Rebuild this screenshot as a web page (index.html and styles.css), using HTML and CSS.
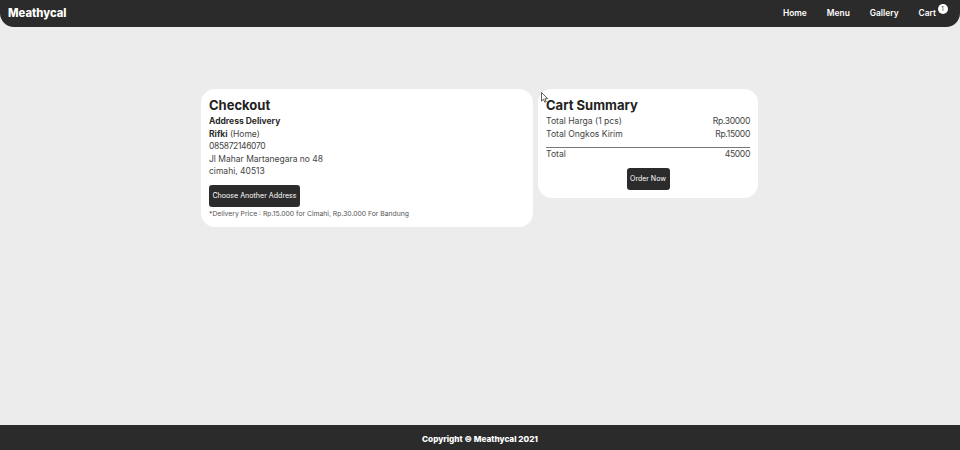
FILE: index.html
```html
<!DOCTYPE html>
<html lang="en">
<head>
    <meta charset="UTF-8">
    <meta name="viewport" content="width=device-width, initial-scale=1.0">
    <title>Meathycal</title>
    <link rel="stylesheet" href="styles.css">
</head>
<body>

<header class="navbar">
    <a class="brand" href="#">Meathycal</a>
    <nav class="nav-links">
        <a href="#">Home</a>
        <a href="#">Menu</a>
        <a href="#">Gallery</a>
        <a class="cart-link" href="#">Cart<span class="cart-badge">1</span></a>
    </nav>
</header>

<main class="content">
    <section class="card checkout">
        <h2>Checkout</h2>
        <p class="line"><b>Address Delivery</b></p>
        <p class="line"><b>Rifki</b> (Home)</p>
        <p class="line amount">085872146070</p>
        <p class="line">Jl Mahar Martanegara no 48</p>
        <p class="line">cimahi, 40513</p>
        <button class="btn btn-address" type="button">Choose Another Address</button>
        <p class="note">*Delivery Price : Rp.15.000 for Cimahi, Rp.30.000 For Bandung</p>
    </section>

    <section class="card summary">
        <h2>Cart Summary</h2>
        <div class="row"><span>Total Harga (1 pcs)</span><span class="amount">Rp.30000</span></div>
        <div class="row"><span>Total Ongkos Kirim</span><span class="amount">Rp.15000</span></div>
        <div class="row total"><span>Total</span><span class="amount">45000</span></div>
        <div class="actions">
            <button class="btn btn-order" type="button">Order Now</button>
        </div>
    </section>
</main>

<footer class="footer">Copyright © Meathycal 2021</footer>

<svg class="cursor" width="8" height="11" viewBox="0 0 8 11">
    <path d="M.5.5v8.6l2-1.9 1.3 3 1.4-.6-1.3-2.9h2.8z" fill="#fff" stroke="#333" stroke-width=".8"/>
</svg>

</body>
</html>
```

FILE: styles.css
```css
* {
    box-sizing: border-box;
}

body {
    font-family: 'Inter', 'Liberation Sans', sans-serif;
    background-color: #ececec;
    color: #2b2b2b;
    margin: 0;
    height: 450px;
    display: flex;
    flex-direction: column;
    overflow: hidden;
}

.navbar {
    background-color: #2b2b2b;
    height: 27px;
    border-radius: 0 0 14px 14px;
    display: flex;
    align-items: center;
    justify-content: space-between;
    padding: 0 24px 2px 8px;
    flex-shrink: 0;
}

.brand {
    color: #fff;
    font-size: 11.2px;
    font-weight: 800;
    text-decoration: none;
}

.nav-links {
    display: flex;
    gap: 20px;
}

.nav-links a {
    color: #fff;
    font-size: 8.4px;
    font-weight: 600;
    text-decoration: none;
}

.cart-link {
    position: relative;
}

.cart-badge {
    position: absolute;
    top: -4px;
    right: -11.5px;
    width: 10px;
    height: 10px;
    border-radius: 50%;
    background-color: #fff;
    color: #2b2b2b;
    font-size: 6px;
    font-weight: 400;
    line-height: 10px;
    text-align: center;
}

.content {
    flex: 1;
    display: flex;
    align-items: flex-start;
    justify-content: center;
    gap: 5px;
    padding: 62px 1px 0 0;
}

.card {
    background-color: #fff;
    border-radius: 14px;
    padding: 8px;
}

.checkout {
    width: 332px;
    height: 138px;
}

.summary {
    width: 220px;
    height: 109px;
}

h2 {
    font-size: 13px;
    font-weight: 700;
    line-height: 17px;
    margin: 0 0 1px;
    color: #222;
}

.line {
    font-size: 8.5px;
    line-height: 12.5px;
    margin: 0;
    color: #444;
}

.line b {
    color: #2b2b2b;
}

.amount {
    letter-spacing: -0.35px;
}

.btn {
    background-color: #2b2b2b;
    color: #fff;
    border: none;
    border-radius: 3px;
    font-family: inherit;
    font-size: 7.1px;
    padding: 0;
    height: 22px;
}

.btn-address {
    width: 91px;
    margin-top: 7px;
    display: block;
}

.note {
    font-size: 6.8px;
    line-height: 10px;
    margin: 2px 0 0;
    color: #555;
}

.row {
    display: flex;
    justify-content: space-between;
    font-size: 8.6px;
    line-height: 12.5px;
    color: #444;
}

.total {
    border-top: 1px solid #777;
    margin-top: 7px;
}

.actions {
    display: flex;
    justify-content: center;
    margin-top: 7px;
}

.btn-order {
    width: 43px;
    font-size: 7px;
}

.footer {
    background-color: #2b2b2b;
    color: #fff;
    height: 25px;
    padding-top: 2px;
    font-size: 8.2px;
    font-weight: 800;
    display: flex;
    align-items: center;
    justify-content: center;
    flex-shrink: 0;
}

.cursor {
    position: absolute;
    left: 541px;
    top: 92px;
}
```
